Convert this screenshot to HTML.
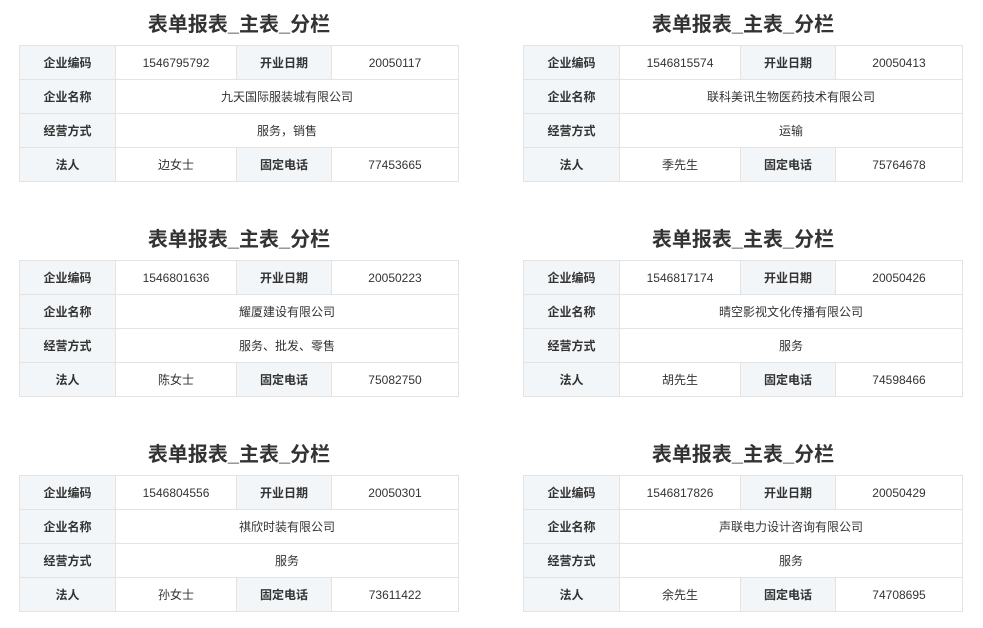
<!DOCTYPE html>
<html><head><meta charset="utf-8"><style>
body{margin:0;width:983px;height:628px;background:#fff;font-family:"Liberation Sans","Noto Sans CJK SC",sans-serif;color:#333;position:relative;overflow:hidden}
.b{position:absolute;width:440px}
.t{position:absolute;left:0;width:440px;top:-43px;height:46px;line-height:46px;text-align:center;font-size:20px;font-weight:bold;color:#333}
table{position:absolute;top:0;left:0;border-collapse:collapse;width:440px;font-size:12px;table-layout:fixed}
td{border:1px solid #e3e3e3;height:33px;padding:0;text-align:center}
td.h{background:#f3f6f8;font-weight:bold}
</style></head><body>
<div class="b" style="left:19px;top:45px"><div class="t">表单报表_主表_分栏</div><table><colgroup><col style="width:96px"><col style="width:121px"><col style="width:95px"><col style="width:127px"></colgroup>
<tr><td class="h">企业编码</td><td>1546795792</td><td class="h">开业日期</td><td>20050117</td></tr>
<tr><td class="h">企业名称</td><td colspan="3">九天国际服装城有限公司</td></tr>
<tr><td class="h">经营方式</td><td colspan="3">服务，销售</td></tr>
<tr><td class="h">法人</td><td>边女士</td><td class="h">固定电话</td><td>77453665</td></tr></table></div>
<div class="b" style="left:523px;top:45px"><div class="t">表单报表_主表_分栏</div><table><colgroup><col style="width:96px"><col style="width:121px"><col style="width:95px"><col style="width:127px"></colgroup>
<tr><td class="h">企业编码</td><td>1546815574</td><td class="h">开业日期</td><td>20050413</td></tr>
<tr><td class="h">企业名称</td><td colspan="3">联科美讯生物医药技术有限公司</td></tr>
<tr><td class="h">经营方式</td><td colspan="3">运输</td></tr>
<tr><td class="h">法人</td><td>季先生</td><td class="h">固定电话</td><td>75764678</td></tr></table></div>
<div class="b" style="left:19px;top:260px"><div class="t">表单报表_主表_分栏</div><table><colgroup><col style="width:96px"><col style="width:121px"><col style="width:95px"><col style="width:127px"></colgroup>
<tr><td class="h">企业编码</td><td>1546801636</td><td class="h">开业日期</td><td>20050223</td></tr>
<tr><td class="h">企业名称</td><td colspan="3">耀厦建设有限公司</td></tr>
<tr><td class="h">经营方式</td><td colspan="3">服务、批发、零售</td></tr>
<tr><td class="h">法人</td><td>陈女士</td><td class="h">固定电话</td><td>75082750</td></tr></table></div>
<div class="b" style="left:523px;top:260px"><div class="t">表单报表_主表_分栏</div><table><colgroup><col style="width:96px"><col style="width:121px"><col style="width:95px"><col style="width:127px"></colgroup>
<tr><td class="h">企业编码</td><td>1546817174</td><td class="h">开业日期</td><td>20050426</td></tr>
<tr><td class="h">企业名称</td><td colspan="3">晴空影视文化传播有限公司</td></tr>
<tr><td class="h">经营方式</td><td colspan="3">服务</td></tr>
<tr><td class="h">法人</td><td>胡先生</td><td class="h">固定电话</td><td>74598466</td></tr></table></div>
<div class="b" style="left:19px;top:475px"><div class="t">表单报表_主表_分栏</div><table><colgroup><col style="width:96px"><col style="width:121px"><col style="width:95px"><col style="width:127px"></colgroup>
<tr><td class="h">企业编码</td><td>1546804556</td><td class="h">开业日期</td><td>20050301</td></tr>
<tr><td class="h">企业名称</td><td colspan="3">祺欣时装有限公司</td></tr>
<tr><td class="h">经营方式</td><td colspan="3">服务</td></tr>
<tr><td class="h">法人</td><td>孙女士</td><td class="h">固定电话</td><td>73611422</td></tr></table></div>
<div class="b" style="left:523px;top:475px"><div class="t">表单报表_主表_分栏</div><table><colgroup><col style="width:96px"><col style="width:121px"><col style="width:95px"><col style="width:127px"></colgroup>
<tr><td class="h">企业编码</td><td>1546817826</td><td class="h">开业日期</td><td>20050429</td></tr>
<tr><td class="h">企业名称</td><td colspan="3">声联电力设计咨询有限公司</td></tr>
<tr><td class="h">经营方式</td><td colspan="3">服务</td></tr>
<tr><td class="h">法人</td><td>余先生</td><td class="h">固定电话</td><td>74708695</td></tr></table></div>
</body></html>
